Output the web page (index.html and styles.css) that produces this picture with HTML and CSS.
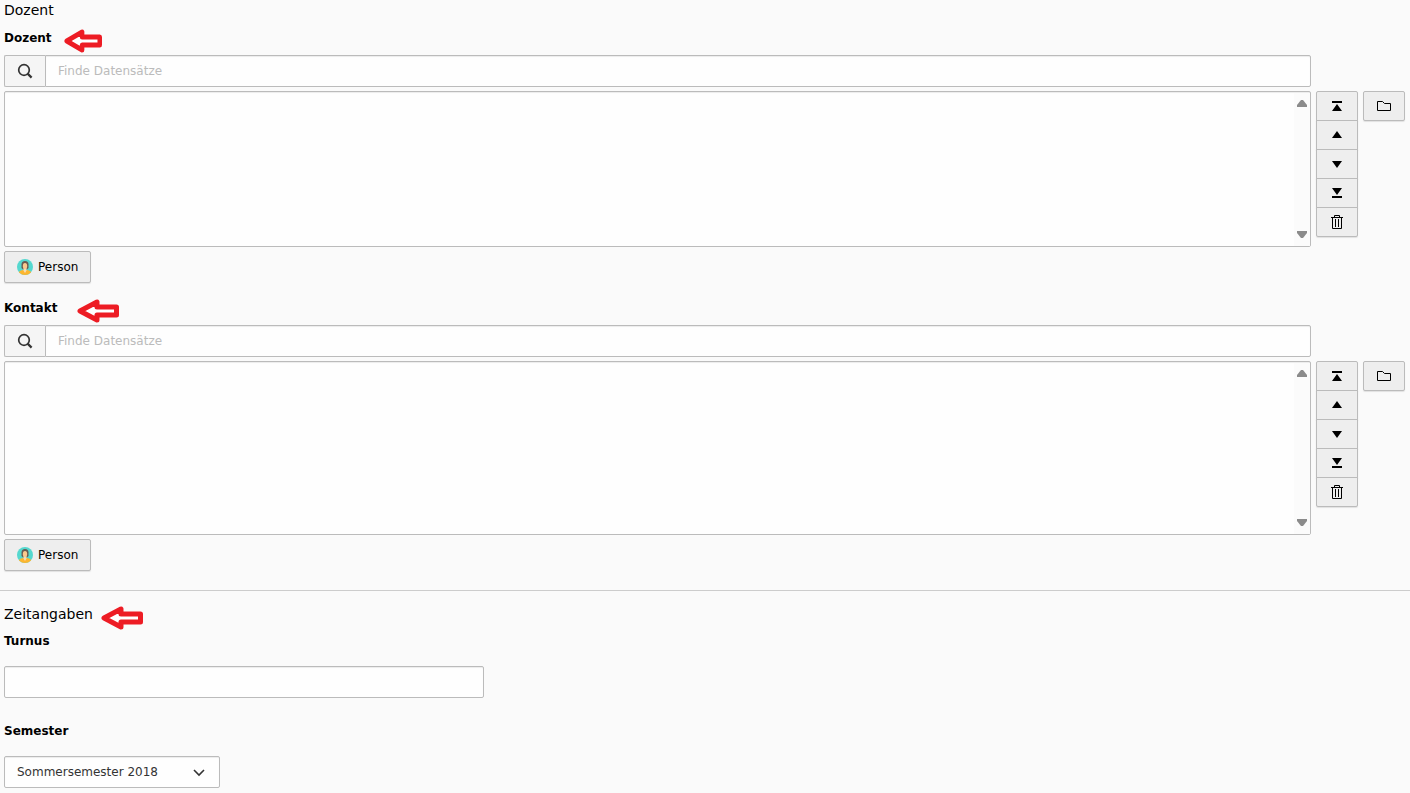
FILE: index.html
```html
<!DOCTYPE html>
<html lang="de">
<head>
  <meta charset="UTF-8">
  <meta name="viewport" content="width=device-width, initial-scale=1.0">
  <title>Dozent</title>
  <link rel="stylesheet" href="styles.css">
</head>
<body>
  <!-- shared icons -->
  <svg class="sprite" aria-hidden="true">
    <symbol id="search" viewBox="0 0 16 16">
      <circle cx="7" cy="7" r="5.300" fill="none" stroke="#333" stroke-width="1.700"/>
      <path d="M10.600 10.600L14.600 14.600" stroke="#333" stroke-width="2.200"/>
    </symbol>
    <symbol id="top" viewBox="0 0 16 16">
      <path d="M3 3h10v2H3zM8 6l5 7H3z"/>
    </symbol>
    <symbol id="up" viewBox="0 0 16 16">
      <path d="M8 4l5 7H3z"/>
    </symbol>
    <symbol id="down" viewBox="0 0 16 16">
      <path d="M3 5h10l-5 7z"/>
    </symbol>
    <symbol id="bottom" viewBox="0 0 16 16">
      <path d="M3 3h10l-5 7zM3 11h10v2H3z"/>
    </symbol>
    <symbol id="trash" viewBox="0 0 16 16">
      <path d="M2 3.500h12M5.500 3V1.500h5V3M3.500 4v10.500h9V4M6.500 5v8M9.500 5v8" fill="none" stroke="#000"/>
    </symbol>
    <symbol id="folder" viewBox="0 0 16 16">
      <path d="M1.500 3.500h5l2 2h6v7h-13z" fill="none" stroke="#000"/>
    </symbol>
    <symbol id="person" viewBox="0 0 16 16">
      <clipPath id="round"><circle cx="8" cy="8" r="8"/></clipPath>
      <g clip-path="url(#round)">
        <path d="M0 0h16v16H0z" fill="#55d8cf"/>
        <path d="M4.500 9V5.500a3.500 3.500 0 0 1 7 0V9l-1.500 1.500H6z" fill="#6b5b52"/>
        <path d="M1 16c0-3 2-4.500 5-5h4c3 .5 5 2 5 5z" fill="#fdb62f"/>
        <path d="M6.500 9h3v2.500L8 14l-1.500-2.500z" fill="#f5dcb5"/>
        <ellipse cx="8" cy="7" rx="2.200" ry="3" fill="#fbc98e"/>
      </g>
    </symbol>
    <symbol id="arrow" viewBox="0 0 42 24" preserveAspectRatio="none">
      <path d="M3 12L20 3v5h19.500v8H20v5z" fill="#fff" stroke="#ed1c24" stroke-width="5" stroke-linejoin="round"/>
    </symbol>
  </svg>

  <section>
    <h2>Dozent</h2>
    <div class="group">
      <label class="title" for="dozent-search">Dozent
        <svg class="arrow arrow-dozent"><use href="#arrow"/></svg>
      </label>
      <div class="relation">
        <div class="search">
          <span class="addon"><svg class="icon"><use href="#search"/></svg></span>
          <input type="text" id="dozent-search" placeholder="Finde Datensätze">
        </div>
        <div class="list">
          <select multiple size="8" aria-label="Dozent"></select>
          <div class="track">
            <svg width="10" height="8"><path d="M4 1h2l4 5v2H0V6z"/></svg>
            <svg width="10" height="8"><path d="M0 0h10v2L6 7H4L0 2z"/></svg>
          </div>
        </div>
        <div class="sort">
          <button type="button" aria-label="An den Anfang"><svg class="icon"><use href="#top"/></svg></button>
          <button type="button" aria-label="Nach oben"><svg class="icon"><use href="#up"/></svg></button>
          <button type="button" aria-label="Nach unten"><svg class="icon"><use href="#down"/></svg></button>
          <button type="button" aria-label="An das Ende"><svg class="icon"><use href="#bottom"/></svg></button>
          <button type="button" aria-label="Entfernen"><svg class="icon"><use href="#trash"/></svg></button>
        </div>
        <button type="button" class="browse" aria-label="Durchsuchen"><svg class="icon"><use href="#folder"/></svg></button>
      </div>
      <button type="button" class="add"><svg class="icon"><use href="#person"/></svg>Person</button>
    </div>

    <div class="group">
      <label class="title" for="kontakt-search">Kontakt
        <svg class="arrow arrow-kontakt"><use href="#arrow"/></svg>
      </label>
      <div class="relation">
        <div class="search">
          <span class="addon"><svg class="icon"><use href="#search"/></svg></span>
          <input type="text" id="kontakt-search" placeholder="Finde Datensätze">
        </div>
        <div class="list list-tall">
          <select multiple size="9" aria-label="Kontakt"></select>
          <div class="track">
            <svg width="10" height="8"><path d="M4 1h2l4 5v2H0V6z"/></svg>
            <svg width="10" height="8"><path d="M0 0h10v2L6 7H4L0 2z"/></svg>
          </div>
        </div>
        <div class="sort">
          <button type="button" aria-label="An den Anfang"><svg class="icon"><use href="#top"/></svg></button>
          <button type="button" aria-label="Nach oben"><svg class="icon"><use href="#up"/></svg></button>
          <button type="button" aria-label="Nach unten"><svg class="icon"><use href="#down"/></svg></button>
          <button type="button" aria-label="An das Ende"><svg class="icon"><use href="#bottom"/></svg></button>
          <button type="button" aria-label="Entfernen"><svg class="icon"><use href="#trash"/></svg></button>
        </div>
        <button type="button" class="browse" aria-label="Durchsuchen"><svg class="icon"><use href="#folder"/></svg></button>
      </div>
      <button type="button" class="add"><svg class="icon"><use href="#person"/></svg>Person</button>
    </div>
  </section>

  <section class="times">
    <h2>Zeitangaben
      <svg class="arrow arrow-zeit"><use href="#arrow"/></svg>
    </h2>
    <div class="field">
      <label class="title" for="turnus">Turnus</label>
      <input type="text" id="turnus" class="turnus">
    </div>
    <div class="field">
      <label class="title" for="semester">Semester</label>
      <div class="dropdown">
        <select id="semester">
          <option>Sommersemester 2018</option>
        </select>
        <svg class="chevron" width="12" height="8"><path d="M1 1l5 5 5-5"/></svg>
      </div>
    </div>
  </section>
</body>
</html>
```
FILE: styles.css
```css
* {
  box-sizing: border-box;
}
body {
  margin: 0;
  background-color: #fafafa;
  color: #000;
  font: 12px/18px Verdana, "DejaVu Sans", sans-serif;
}
section {
  padding: 0 5px 3px 4px;
}
.sprite {
  position: absolute;
  width: 0;
  height: 0;
}
h2 {
  position: relative;
  margin: 0 0 9px;
  font-size: 14px;
  font-weight: 400;
  line-height: 20px;
}
.title {
  display: block;
  position: relative;
  margin-bottom: 8px;
  font-weight: 700;
}
.group {
  margin-bottom: 16px;
}
.icon {
  display: block;
  width: 16px;
  height: 16px;
}

/* red hint arrows */
.arrow {
  position: absolute;
  top: 0;
  width: 42px;
  height: 24px;
}
.arrow-dozent {
  left: 60px;
  width: 38px;
}
.arrow-kontakt {
  left: 73px;
}
.arrow-zeit {
  top: 2px;
  left: 97px;
}

/* controls */
input,
select,
button {
  margin: 0;
  border: 1px solid #bbb;
  border-radius: 2px;
  font: inherit;
}
input,
select {
  background-color: #fefefe;
  color: #333;
  box-shadow: inset 0 1px 1px rgba(0, 0, 0, 0.075);
}
input {
  height: 32px;
  padding: 0 12px;
}
input::placeholder {
  color: #bbb;
  opacity: 1;
}
button {
  display: flex;
  align-items: center;
  justify-content: center;
  height: 30px;
  padding: 0;
  background-color: #eee;
  color: #000;
  box-shadow: 0 1px 1px rgba(0, 0, 0, 0.1);
}

/* record relation */
.relation {
  display: grid;
  grid-template-columns: 1fr 42px 42px;
  gap: 4px 5px;
  align-items: start;
  margin-bottom: 4px;
}
.search {
  display: flex;
  grid-column: 1;
}
.search input {
  flex: 1;
  border-radius: 0 2px 2px 0;
}
.addon {
  display: flex;
  align-items: center;
  justify-content: center;
  width: 41px;
  border: 1px solid #bbb;
  border-right: 0;
  border-radius: 2px 0 0 2px;
  background-color: #f5f5f5;
}
.list {
  position: relative;
  grid-column: 1;
  height: 156px;
}
.list-tall {
  height: 174px;
}
.list select {
  display: block;
  width: 100%;
  height: 100%;
}
.track {
  position: absolute;
  top: 2px;
  right: 1px;
  bottom: 1px;
  display: flex;
  flex-direction: column;
  align-items: center;
  justify-content: space-between;
  width: 16px;
  padding: 6px 0 7px;
  background-color: #fbfbfb;
  fill: #8b8b8b;
}
.sort button {
  width: 100%;
  border-radius: 0;
}
.sort button + button {
  margin-top: -1px;
}
.sort button:first-child {
  border-radius: 2px 2px 0 0;
}
.sort button:last-child {
  border-radius: 0 0 2px 2px;
}
.add {
  gap: 5px;
  height: 32px;
  padding: 0 12px;
}

/* second section */
.times {
  padding-top: 13px;
  border-top: 1px solid #ccc;
}
.times h2 {
  margin-bottom: 8px;
}
.field {
  margin-bottom: 24px;
}
.field .title {
  margin-bottom: 16px;
}
.turnus {
  display: block;
  width: 100%;
  max-width: 480px;
}
.dropdown {
  position: relative;
  width: 216px;
}
.dropdown select {
  display: block;
  width: 100%;
  height: 32px;
  padding: 0 32px 0 12px;
  appearance: none;
}
.chevron {
  position: absolute;
  top: 13px;
  right: 15px;
  fill: none;
  stroke: #333;
  stroke-width: 1.6;
  pointer-events: none;
}
```
